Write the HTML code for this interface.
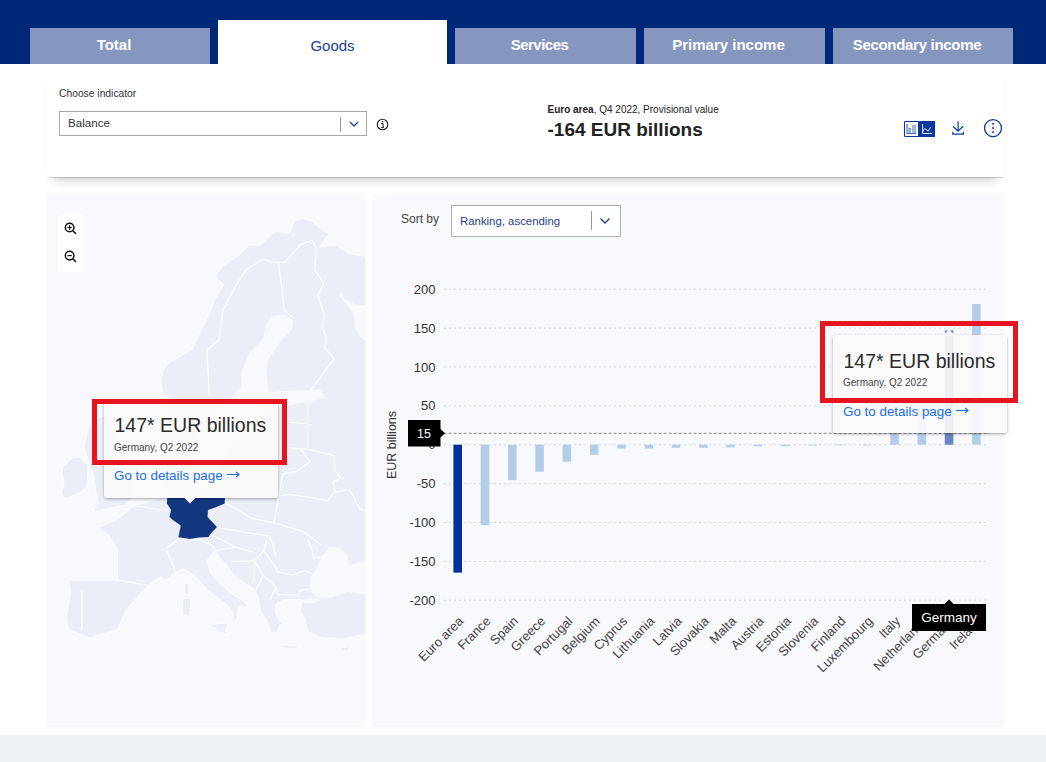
<!DOCTYPE html>
<html><head><meta charset="utf-8">
<style>
*{margin:0;padding:0;box-sizing:border-box}
html,body{width:1046px;height:762px;overflow:hidden;background:#fff;font-family:"Liberation Sans",sans-serif;color:#222}
.abs{position:absolute}
#hdr{left:0;top:0;width:1046px;height:64px;background:#002878}
.tab{position:absolute;top:28px;height:36px;background:#8596bf;color:#fff;font-weight:bold;font-size:15px;text-align:center;line-height:34px;padding-right:12px}
#goods{top:20px;height:46px;background:#fff;color:#1c3f94;font-weight:normal;line-height:51px;padding-right:0}
#card{left:47px;top:64px;width:957px;height:113px;background:#fff;box-shadow:0 1px 1px -0.5px rgba(0,0,0,0.16),0 9px 10px -7px rgba(0,0,0,0.24)}
.panel{position:absolute;top:194px;height:533px;background:#f7f9fd}
#footer{left:0;top:735px;width:1046px;height:27px;background:#edf2f6}
.txt{position:absolute;white-space:nowrap}
.tip{position:absolute;background:rgba(250,250,250,0.92);border-radius:3px;box-shadow:0 1px 3px rgba(0,0,0,0.35);padding:0 0 0 11px}
.t1{position:absolute;left:10.5px;top:14.5px;font-size:19.5px;color:#2b2b2b;white-space:nowrap}
.t2{position:absolute;left:10px;top:42px;font-size:10px;color:#444;white-space:nowrap}
.t3{position:absolute;left:10px;top:68.5px;font-size:13.4px;color:#1a6ee6;white-space:nowrap}
.redbox{position:absolute;border:5px solid #e5141e}
.yl{font-size:13px;fill:#333;font-family:"Liberation Sans",sans-serif}
.xl{font-size:13px;fill:#444;font-family:"Liberation Sans",sans-serif}
.yt{font-size:12.5px;fill:#333;font-family:"Liberation Sans",sans-serif}
.yw{font-size:12.5px;fill:#fff;font-family:"Liberation Sans",sans-serif}
.gw{font-size:13.5px;fill:#fff;font-family:"Liberation Sans",sans-serif}
</style></head><body>
<div id="hdr" class="abs"></div>
<div class="tab" style="left:30px;width:180px">Total</div>
<div class="tab" id="goods" style="left:218px;width:229px">Goods</div>
<div class="tab" style="left:455px;width:181px;letter-spacing:-0.5px">Services</div>
<div class="tab" style="left:644px;width:181px">Primary income</div>
<div class="tab" style="left:833px;width:180px;letter-spacing:-0.3px">Secondary income</div>

<div id="card" class="abs"></div>
<div class="txt" style="left:59px;top:88px;font-size:10.3px;color:#333">Choose indicator</div>
<div class="abs" style="left:59px;top:111px;width:308px;height:25px;border:1px solid #a9a9a9;background:#fff"></div>
<div class="txt" style="left:68px;top:115.5px;font-size:11.6px;color:#333">Balance</div>
<div class="abs" style="left:340px;top:117px;width:1px;height:15px;background:#999"></div>
<svg class="abs" style="left:348px;top:120px" width="12" height="8"><path d="M2 2 L6 6 L10 2" fill="none" stroke="#1c3f94" stroke-width="1.3"/></svg>
<svg class="abs" style="left:376px;top:118px" width="13" height="13"><circle cx="6.5" cy="6.5" r="5.3" fill="none" stroke="#222" stroke-width="1.1"/><path d="M5.2 5.6 H7.1 V9.4 M5.1 9.6 H8.1" fill="none" stroke="#222" stroke-width="1"/><circle cx="6.7" cy="3.7" r="0.75" fill="#222"/></svg>

<div class="txt" style="left:547.5px;top:104px;font-size:10px;color:#222"><b>Euro area</b>, Q4 2022, Provisional value</div>
<div class="txt" style="left:547.5px;top:119px;font-size:19px;font-weight:bold;color:#222">-164 EUR billions</div>

<!-- icons -->
<svg class="abs" style="left:903px;top:120px" width="33" height="18">
 <rect x="1.5" y="1.5" width="30" height="15" rx="0.8" fill="#fff" stroke="#0a37a0" stroke-width="1.1"/>
 <rect x="15" y="1" width="17" height="16" fill="#0a37a0"/>
 <g fill="#b7c3e3" stroke="#5f79bf" stroke-width="0.6">
 <rect x="3.8" y="4.3" width="1" height="9.2"/>
 <rect x="5.9" y="8.3" width="1.7" height="5.2"/>
 <rect x="9.8" y="5.2" width="2.6" height="8.3"/>
 </g>
 <path d="M3.6 13.6 H13.2" stroke="#4b68b5" stroke-width="1"/>
 <path d="M19.6 4 V13.5 H29" stroke="#fff" stroke-width="0.9" fill="none"/>
 <path d="M19.9 11.8 L21.5 8.4 L25.3 11.1 L27.6 7.2" stroke="#fff" stroke-width="0.8" fill="none"/>
</svg>
<svg class="abs" style="left:950px;top:120px" width="16" height="17"><path d="M8.1 1.2 V11 M3 6.3 L8.1 11.2 L13.1 6.3 M2.8 11.8 V14.1 H13.4 V11.8" fill="none" stroke="#0a37a0" stroke-width="1.2"/></svg>
<svg class="abs" style="left:982px;top:118px" width="22" height="21"><circle cx="11" cy="10.1" r="8.5" fill="none" stroke="#0a37a0" stroke-width="1.3"/><rect x="10.2" y="5" width="1.7" height="1.7" fill="#0a37a0"/><rect x="10.2" y="9.2" width="1.7" height="1.7" fill="#0a37a0"/><rect x="10.2" y="13.2" width="1.7" height="1.7" fill="#0a37a0"/></svg>

<div class="panel" style="left:46px;width:320px"></div>
<div class="panel" style="left:372px;width:633px"></div>
<div id="footer" class="abs"></div>

<svg class="abs" style="left:46px;top:194px" width="320" height="533" viewBox="46 194 320 533">
<g fill="#ebeef6" stroke="#fff" stroke-width="0.8" stroke-linejoin="round">
<path d="M294.6,221 L303,218.5 L311.6,221 L320,228 L328.6,233.7 L320,246.4 L337,245 L348.4,253.5 L366,256.4 L366,634.4 L341.3,639 L320,637.4 L307.8,631.3 L304.8,619.2 L300.2,611.5 L301.8,600.9 L300.2,599.4 L285,599.4 L275.9,603.9 L275.1,611.5 L278.9,619.2 L283.5,625.2 L278.9,625.2 L277.4,632.9 L269.8,632.9 L268.3,622.2 L260.7,611.5 L257.6,596.1 L254.5,589.8 L245,583.5 L234,575.7 L226.1,564.6 L219.8,558.3 L215.1,550.5 L207.2,560 L210.4,572.5 L219.8,583.5 L230.9,593 L245,602.4 L247.4,608 L238.7,605.6 L237.2,618.2 L232.4,622.9 L234,615 L229.3,607.2 L219.8,599.3 L207.2,589.8 L194.6,575.7 L183.6,568.6 L175.7,572.5 L166.3,580.4 L160,577.2 L148,585.4 L125.9,610.2 L117.6,629.5 L90,637.8 L68,629.5 L66.7,615.7 L70.8,591 L68,580 L117.6,580 L117.6,549.6 L109.4,535.8 L98.4,527.6 L117.6,519.3 L134.2,505.5 L145.2,502.8 L160,498 L165,470 L160,430 L170.4,400 L170.4,397.6 L162.5,394.5 L161,381.9 L162.5,370.9 L170,362 L180,356.7 L192.5,348.5 L201,330 L209.5,313 L215.2,298.9 L223.7,284.7 L215.2,276.2 L223.7,264.9 L237.9,256.4 L249.2,245 L260.5,245 L274.7,230.8 L288.9,233.7 Z"/>
<path d="M84,445 L88,430 L95,419 L104,416 L112,425 L120,440 L128,470 L135,495 L126,505 L110,508 L93,512 L98,502 L96,492 L94,480 L90,465 L86,455 Z"/>
<path d="M62,468 L72,458 L80,457 L88,465 L87.5,486 L80,493 L66,498 L61,494 L64,484 Z"/>
<path d="M210.4,624.5 L227.7,622.9 L226.1,634 L219.8,632.4 Z"/>
<path d="M182.5,599 L190.7,597.7 L190,615.8 L183,615 Z"/>
<path d="M184.4,584 L189.1,583.5 L188.5,594.6 L185,594 Z"/>
<path d="M282,645 L298.7,646 L296,649 L284,648 Z"/>
<path d="M339.8,648 L350.5,646.6 L348,651 L341,651 Z"/>
</g>
<g fill="#f7f9fd" stroke="none">
<path d="M271.9,315.9 L283.2,314.5 L293.1,320 L291.7,330 L280.4,341.4 L269,358.4 L266.2,369.7 L269,392.4 L283.2,391 L320,389.6 L325.7,398 L297.4,403.7 L262,410 L235,440 L215,480 L195,495 L185,470 L200,425 L230,400 L240.7,386.7 L242.1,369.7 L249.2,352.7 L263.4,338.6 L266.2,324.4 Z"/>
<path d="M340,292.2 L344.3,299 L354.6,304.1 L366,305.8 L366,341.6 L359.7,336.5 L354.6,326.3 L354.6,314.3 L346,304.1 L340,295.6 Z"/>
<path d="M301.8,599.5 L312,597.8 L321.5,600 L312,603.5 L302,602.5 Z"/>
<path d="M315.5,570.4 L321.5,556.7 L329.2,547.6 L338.3,547.6 L347.4,553.7 L349,565.9 L356.6,562.8 L366,561.3 L366,594.8 L347.4,591.8 L332.2,597.8 L317,597.8 L309.4,588.7 L310.9,578 Z"/>
</g>
<g fill="none" stroke="#fff" stroke-width="1.1" stroke-linejoin="round">
<path d="M263.4,259 L246,270 L235,287 L223,310 L219,340 L207,350 L209.5,398"/>
<path d="M263.4,259 L272,262 L285,262 L300,245 L312,240 L317,250 L314.5,270 L323.9,283.6 L317.9,295.6 L324.7,316 L322.2,326.3 L326.4,338.2 L324.7,347.6 L334.1,358.7 L310.2,391.1"/>
<path d="M278,263 L281,280 L284,310 L293,318"/>
<path d="M289.7,422.3 L312,424.5"/>
<path d="M280.8,446.9 L300.9,449 L307.6,449 L307.6,400"/>
<path d="M300.9,449 L310,462 L296.4,471.4 L283,473.6 L278.6,496"/>
<path d="M307.6,449 L334.3,455.8 L334.7,470 L341,477.9 L333.2,481.8 L335.2,492"/>
<path d="M278.6,496 L290,494.4 L305.8,496.8 L327.8,500.7 L334.1,492 L349.8,489.7 L353,496 L360,509.3 L366,510.8"/>
<path d="M225,502.6 L251.8,518.3 L274,522.7 L278.6,496"/>
<path d="M216,527.2 L240.6,531.6 L269.6,536 L276.3,556.2"/>
<path d="M274,522.7 L303,531.6 L321,545"/>
<path d="M207,513.8 L216,527.2"/>
<path d="M117.6,580 L148,585.4"/>
<path d="M134.2,505.5 L167.2,511"/>
<path d="M167,550.5 L175.7,572.5"/>
<path d="M167,548 L180,538 L200,540 L212,545 L215.1,550.5"/>
<path d="M212,534.7 L235.6,547.3 L253,552"/>
<path d="M215.1,550.5 L235.6,547.3"/>
<path d="M231,561.5 L254.5,561 L254.5,582"/>
<path d="M266.7,540 L263.7,550.7 L275.9,567.4 L277.4,572 L292.6,575 L304.8,570.4 L314,575"/>
<path d="M263.7,550.7 L254.5,561 L263,575 L256,590"/>
<path d="M275.9,587.2 L277.4,594.8 L298.7,594.8 L300.2,590.2 L309.4,588.7"/>
<path d="M263,575 L275.9,587.2 L270,600"/>
<path d="M307.8,540 L312,550 L314,558.3 L321.5,556.7"/>
<path d="M81.8,591 L81.8,629"/>
</g>
<path fill="#13377f" d="M167.2,498 L225,498 L224.6,503.4 L215.2,507.6 L208,510 L207.5,517 L217,527 L211.2,533 L208.5,537 L198.4,537.5 L190,539 L178.4,537.2 L180.8,525.5 L173.2,520.2 L169.5,517 L171.1,509.7 L166.9,503.4 Z"/>
</svg>

<!-- zoom controls -->
<div class="abs" style="left:58px;top:214px;width:25px;height:58px;background:#fff"></div>
<svg class="abs" style="left:62px;top:220px" width="18" height="46">
<g fill="none" stroke="#111" stroke-width="1.5"><circle cx="7.6" cy="7.5" r="4.3"/><path d="M10.8 10.7 L14 13.8"/><path d="M5.4 7.5 H9.8 M7.6 5.3 V9.7" stroke-width="1.2"/>
<circle cx="7.6" cy="35.6" r="4.3"/><path d="M10.8 38.8 L14 41.9"/><path d="M5.4 35.6 H9.8" stroke-width="1.2"/></g></svg>

<!-- map tooltip -->
<div class="tip" style="left:104px;top:399.5px;width:174px;height:98px">
 <div class="t1">147* EUR billions</div>
 <div class="t2">Germany, Q2 2022</div>
 <div class="t3">Go to details page<svg width="17" height="9" style="margin-left:0;vertical-align:1px"><path d="M4 4.5 H16 M13 2 L16 4.5 L13 7" fill="none" stroke="#1a6ee6" stroke-width="1.1"/></svg></div>
</div>
<div class="redbox" style="left:92px;top:399px;width:195px;height:66px"></div>
<svg class="abs" style="left:183px;top:497px" width="14" height="8"><path d="M1 0.5 L7 6.5 L13 0.5 Z" fill="#f4f5f8"/></svg>

<!-- chart -->
<svg class="abs" style="left:372px;top:194px" width="633" height="533" viewBox="372 194 633 533">
<line x1="444" y1="289.2" x2="988.5" y2="289.2" stroke="#d3d6db" stroke-width="1" stroke-dasharray="2,3"/>
<text x="435.5" y="293.8" text-anchor="end" class="yl">200</text>
<line x1="444" y1="328.1" x2="988.5" y2="328.1" stroke="#d3d6db" stroke-width="1" stroke-dasharray="2,3"/>
<text x="435.5" y="332.7" text-anchor="end" class="yl">150</text>
<line x1="444" y1="366.9" x2="988.5" y2="366.9" stroke="#d3d6db" stroke-width="1" stroke-dasharray="2,3"/>
<text x="435.5" y="371.6" text-anchor="end" class="yl">100</text>
<line x1="444" y1="405.8" x2="988.5" y2="405.8" stroke="#d3d6db" stroke-width="1" stroke-dasharray="2,3"/>
<text x="435.5" y="410.4" text-anchor="end" class="yl">50</text>
<line x1="444" y1="444.7" x2="988.5" y2="444.7" stroke="#d3d6db" stroke-width="1" stroke-dasharray="2,3"/>
<text x="435.5" y="449.3" text-anchor="end" class="yl">0</text>
<line x1="444" y1="483.6" x2="988.5" y2="483.6" stroke="#d3d6db" stroke-width="1" stroke-dasharray="2,3"/>
<text x="435.5" y="488.2" text-anchor="end" class="yl">-50</text>
<line x1="444" y1="522.5" x2="988.5" y2="522.5" stroke="#d3d6db" stroke-width="1" stroke-dasharray="2,3"/>
<text x="435.5" y="527.1" text-anchor="end" class="yl">-100</text>
<line x1="444" y1="561.3" x2="988.5" y2="561.3" stroke="#d3d6db" stroke-width="1" stroke-dasharray="2,3"/>
<text x="435.5" y="565.9" text-anchor="end" class="yl">-150</text>
<line x1="444" y1="600.2" x2="988.5" y2="600.2" stroke="#d3d6db" stroke-width="1" stroke-dasharray="2,3"/>
<text x="435.5" y="604.8" text-anchor="end" class="yl">-200</text>
<rect x="453.4" y="444.7" width="8.6" height="127.9" fill="#00309a"/>
<text transform="translate(464.2,622) rotate(-45)" text-anchor="end" class="xl">Euro area</text>
<rect x="480.7" y="444.7" width="8.6" height="80.5" fill="#b3cde8"/>
<text transform="translate(491.5,622) rotate(-45)" text-anchor="end" class="xl">France</text>
<rect x="508.0" y="444.7" width="8.6" height="35.5" fill="#b3cde8"/>
<text transform="translate(518.8,622) rotate(-45)" text-anchor="end" class="xl">Spain</text>
<rect x="535.3" y="444.7" width="8.6" height="27.0" fill="#b3cde8"/>
<text transform="translate(546.1,622) rotate(-45)" text-anchor="end" class="xl">Greece</text>
<rect x="562.6" y="444.7" width="8.6" height="17.1" fill="#b3cde8"/>
<text transform="translate(573.4,622) rotate(-45)" text-anchor="end" class="xl">Portugal</text>
<rect x="589.9" y="444.7" width="8.6" height="10.1" fill="#b3cde8"/>
<text transform="translate(600.7,622) rotate(-45)" text-anchor="end" class="xl">Belgium</text>
<rect x="617.2" y="444.7" width="8.6" height="3.9" fill="#b3cde8"/>
<text transform="translate(628.0,622) rotate(-45)" text-anchor="end" class="xl">Cyprus</text>
<rect x="644.5" y="444.7" width="8.6" height="3.9" fill="#b3cde8"/>
<text transform="translate(655.3,622) rotate(-45)" text-anchor="end" class="xl">Lithuania</text>
<rect x="671.8" y="444.7" width="8.6" height="3.1" fill="#b3cde8"/>
<text transform="translate(682.6,622) rotate(-45)" text-anchor="end" class="xl">Latvia</text>
<rect x="699.1" y="444.7" width="8.6" height="3.1" fill="#b3cde8"/>
<text transform="translate(709.9,622) rotate(-45)" text-anchor="end" class="xl">Slovakia</text>
<rect x="726.4" y="444.7" width="8.6" height="2.7" fill="#b3cde8"/>
<text transform="translate(737.2,622) rotate(-45)" text-anchor="end" class="xl">Malta</text>
<rect x="753.7" y="444.7" width="8.6" height="1.6" fill="#b3cde8"/>
<text transform="translate(764.5,622) rotate(-45)" text-anchor="end" class="xl">Austria</text>
<rect x="781.0" y="444.7" width="8.6" height="1.6" fill="#b3cde8"/>
<text transform="translate(791.8,622) rotate(-45)" text-anchor="end" class="xl">Estonia</text>
<rect x="808.3" y="444.7" width="8.6" height="0.8" fill="#b3cde8"/>
<text transform="translate(819.1,622) rotate(-45)" text-anchor="end" class="xl">Slovenia</text>
<rect x="835.6" y="444.7" width="8.6" height="0.6" fill="#b3cde8"/>
<text transform="translate(846.4,622) rotate(-45)" text-anchor="end" class="xl">Finland</text>
<rect x="862.9" y="444.7" width="8.6" height="0.6" fill="#b3cde8"/>
<text transform="translate(873.7,622) rotate(-45)" text-anchor="end" class="xl">Luxembourg</text>
<rect x="890.2" y="433.0" width="8.6" height="11.7" fill="#b3cde8"/>
<text transform="translate(901.0,622) rotate(-45)" text-anchor="end" class="xl">Italy</text>
<rect x="917.5" y="406.6" width="8.6" height="38.1" fill="#b3cde8"/>
<text transform="translate(928.3,622) rotate(-45)" text-anchor="end" class="xl">Netherlands</text>
<rect x="944.8" y="330.4" width="8.6" height="114.3" fill="#6b85c2"/>
<text transform="translate(955.6,622) rotate(-45)" text-anchor="end" class="xl">Germany</text>
<rect x="972.1" y="304.0" width="8.6" height="140.7" fill="#b3cde8"/>
<text transform="translate(982.9,622) rotate(-45)" text-anchor="end" class="xl">Ireland</text>
<text transform="translate(396,445) rotate(-90)" text-anchor="middle" class="yt">EUR billions</text>
<line x1="443.6" y1="433.3" x2="989.5" y2="433.3" stroke="#777" stroke-width="0.9" stroke-dasharray="3,2"/>
<path d="M408,420 H440.5 V429 L445,433.3 L440.5,437.6 V446.6 H408 Z" fill="#000"/>
<text x="424" y="437.5" text-anchor="middle" class="yw">15</text>
<path d="M912,604 H944.5 L949,599.5 L953.5,604 H986 V631 H912 Z" fill="#000"/>
<text x="949" y="622" text-anchor="middle" class="gw">Germany</text>
</svg>
<div class="txt" style="left:401px;top:212px;font-size:12px;color:#444">Sort by</div>
<div class="abs" style="left:451px;top:205px;width:170px;height:32px;border:1px solid #aab0b8;background:#fff"></div>
<div class="txt" style="left:460px;top:215px;font-size:11.4px;color:#1c3f94">Ranking, ascending</div>
<div class="abs" style="left:591px;top:211px;width:1px;height:19px;background:#999"></div>
<svg class="abs" style="left:599px;top:215.5px" width="12" height="10"><path d="M1.5 2.5 L6 7 L10.5 2.5" fill="none" stroke="#1c3f94" stroke-width="1.3"/></svg>

<!-- chart tooltip -->
<div class="tip" style="left:833px;top:335px;width:174px;height:98px">
 <div class="t1">147* EUR billions</div>
 <div class="t2">Germany, Q2 2022</div>
 <div class="t3">Go to details page<svg width="17" height="9" style="margin-left:0;vertical-align:1px"><path d="M4 4.5 H16 M13 2 L16 4.5 L13 7" fill="none" stroke="#1a6ee6" stroke-width="1.1"/></svg></div>
</div>
<svg class="abs" style="left:941px;top:329px" width="16" height="7"><path d="M1 7 L8 0.5 L15 7 Z" fill="#f6f7f9"/></svg>
<div class="redbox" style="left:820px;top:321px;width:198px;height:82px"></div>


</body></html>
